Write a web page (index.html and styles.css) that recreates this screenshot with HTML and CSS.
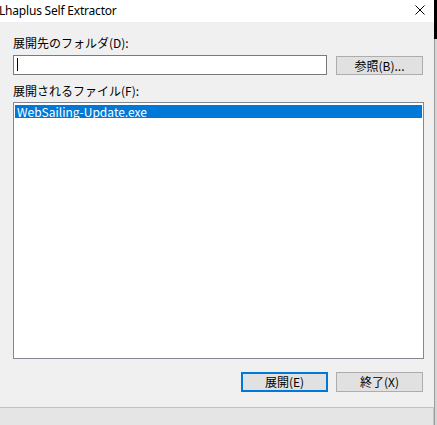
FILE: index.html
```html
<!DOCTYPE html>
<html lang="ja">
<head>
<meta charset="utf-8">
<title>Lhaplus Self Extractor</title>
<link rel="stylesheet" href="styles.css">
</head>
<body>
<div class="screen">
  <div class="window">
    <div class="titlebar">
      <span class="title">Lhaplus Self Extractor</span>
      <svg class="close" width="10" height="10" viewBox="0 0 10 10"><path d="M0.5 0.5 L9.5 9.5 M9.5 0.5 L0.5 9.5" stroke="#000" stroke-width="1" fill="none"/></svg>
    </div>
    <div class="body">
      <div class="label first">展開先のフォルダ(D):</div>
      <div class="row">
        <div class="textbox"><span class="caret"></span></div>
        <div class="btn browse">参照(B)...</div>
      </div>
      <div class="label second">展開されるファイル(F):</div>
      <div class="listbox">
        <div class="item selected">WebSailing-Update.exe</div>
      </div>
      <div class="actions">
        <div class="btn default">展開(E)</div>
        <div class="btn">終了(X)</div>
      </div>
    </div>
    <div class="statusbar"></div>
  </div>
  <div class="backdrop">
    <div class="backdrop-top"></div>
    <div class="backdrop-rest"></div>
  </div>
</div>
</body>
</html>
```
FILE: styles.css
```css
html, body {
  margin: 0;
  padding: 0;
  width: 437px;
  height: 425px;
  overflow: hidden;
  background: #f0f0f0;
}

.screen {
  display: flex;
  width: 437px;
  height: 425px;
}

.window {
  width: 434px;
  height: 425px;
  display: flex;
  flex-direction: column;
  background: #f0f0f0;
  font-family: "Noto Sans CJK JP", "Noto Sans", sans-serif;
  font-size: 12px;
  color: #000;
}

.titlebar {
  height: 22px;
  background: #ffffff;
  display: flex;
  align-items: center;
  justify-content: space-between;
  padding: 0 9px 0 0;
  flex: none;
}

.title {
  font-family: "Noto Sans", "Open Sans", sans-serif;
  font-size: 12px;
  letter-spacing: -0.2px;
  line-height: 22px;
  margin-left: -1px;
  color: #000;
}

.close {
  display: block;
  margin-top: -2px;
}

.body {
  flex: 1;
  display: flex;
  flex-direction: column;
  padding: 0 10px 0 13px;
}

.label {
  height: 12px;
  line-height: 12px;
  font-size: 12px;
  white-space: nowrap;
}

.label.first {
  margin-top: 15px;
}

.row {
  display: flex;
  margin-top: 6px;
  gap: 9px;
  align-items: flex-start;
}

.textbox {
  box-sizing: border-box;
  width: 314px;
  height: 20px;
  border: 1px solid #7a7a7a;
  background: #fff;
  padding: 2px 0 0 3px;
}

.caret {
  display: block;
  width: 1px;
  height: 13px;
  background: #000;
}

.btn {
  box-sizing: border-box;
  width: 87px;
  height: 19px;
  border: 1px solid #adadad;
  background: #e1e1e1;
  display: flex;
  align-items: center;
  justify-content: center;
  font-size: 12px;
  line-height: 12px;
  white-space: nowrap;
}

.btn.browse {
  margin-top: 1px;
}

.label.second {
  margin-top: 10px;
}

.listbox {
  box-sizing: border-box;
  width: 411px;
  height: 257px;
  margin-top: 5px;
  border: 1px solid #828790;
  background: #fff;
  padding: 2px 1px;
}

.item {
  height: 13px;
  line-height: 13px;
  padding-left: 2px;
  font-size: 12px;
  white-space: nowrap;
}

.item.selected {
  background: #0078d7;
  color: #fff;
}

.actions {
  display: flex;
  justify-content: flex-end;
  gap: 8px;
  margin-top: 13px;
  margin-right: 1px;
}

.actions .btn {
  height: 20px;
}

.btn.default {
  border: 2px solid #0078d7;
}

.statusbar {
  flex: none;
  height: 17px;
  border-top: 1px solid #c2c2c2;
  border-right: 1px solid #c8c8c8;
  background: #e5e5e5;
}

.backdrop {
  width: 3px;
  display: flex;
  flex-direction: column;
  border-left: 0;
}

.backdrop-top {
  height: 39px;
  background: #000;
}

.backdrop-rest {
  flex: 1;
  background: #d6d6d6;
  border-left: 1px solid #9a9a9a;
}
```
